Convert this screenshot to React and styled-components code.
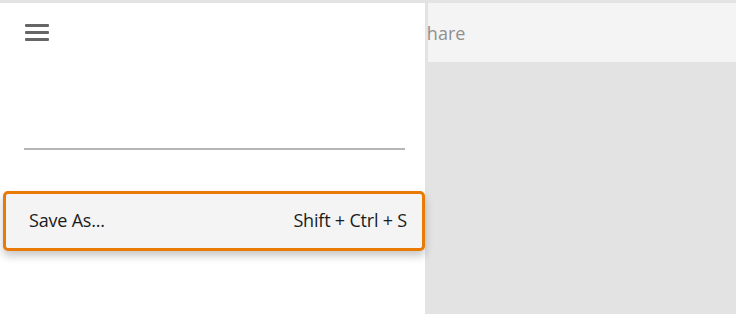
import styled, { createGlobalStyle } from "styled-components";

const Global = createGlobalStyle`
    html, body {
        margin: 0;
        padding: 0;
        background: #e3e3e3;
        font-family: "Open Sans", "Noto Sans", sans-serif;
    }
`;

const Screen = styled.div`
    width: 736px;
    height: 314px;
    padding-top: 3px;
    box-sizing: border-box;
    display: grid;
    grid-template-columns: 425px 1fr;
    column-gap: 3px;
    background: #e3e3e3;
    overflow: hidden;
`;

const Pane = styled.div`
    background: #ffffff;
    display: flex;
    flex-direction: column;
`;

const MenuButton = styled.button`
    width: 26px;
    height: 17px;
    margin: 21px 0 0 25px;
    padding: 0;
    border: 0;
    background: transparent;
    display: flex;
    flex-direction: column;
    justify-content: space-between;
    align-items: flex-start;
    span {
        display: block;
        width: 24px;
        height: 3px;
        background: #666666;
        border-radius: 1px;
    }
`;

const Divider = styled.hr`
    margin: 107px 20px 0 24px;
    border: 0;
    height: 2px;
    background: #b5b5b5;
`;

const Command = styled.div`
    margin: 41px 0 0 3px;
    height: 60px;
    box-sizing: border-box;
    border: 3px solid #e87a05;
    border-radius: 5px;
    background: #f4f4f4;
    box-shadow: 0 5px 8px rgba(0, 0, 0, 0.22);
    display: flex;
    align-items: center;
    justify-content: space-between;
    padding: 0 15px 2px 23px;
    font-size: 18px;
    letter-spacing: -0.2px;
    color: #1b1b1b;
`;

const Main = styled.div`
    display: flex;
    flex-direction: column;
`;

const Header = styled.div`
    height: 59px;
    background: #f4f4f4;
    overflow: hidden;
    display: flex;
    align-items: center;
`;

const HeaderTitle = styled.span`
    margin-left: -11px;
    font-size: 18px;
    color: #8f8f8f;
`;

export default function App() {
    return (
        <>
            <Global />
            <Screen>
                <Pane>
                    <MenuButton aria-label="Menu">
                        <span />
                        <span />
                        <span />
                    </MenuButton>
                    <Divider />
                    <Command>
                        <span>Save As...</span>
                        <span>Shift + Ctrl + S</span>
                    </Command>
                </Pane>
                <Main>
                    <Header>
                        <HeaderTitle>Share</HeaderTitle>
                    </Header>
                </Main>
            </Screen>
        </>
    );
}
